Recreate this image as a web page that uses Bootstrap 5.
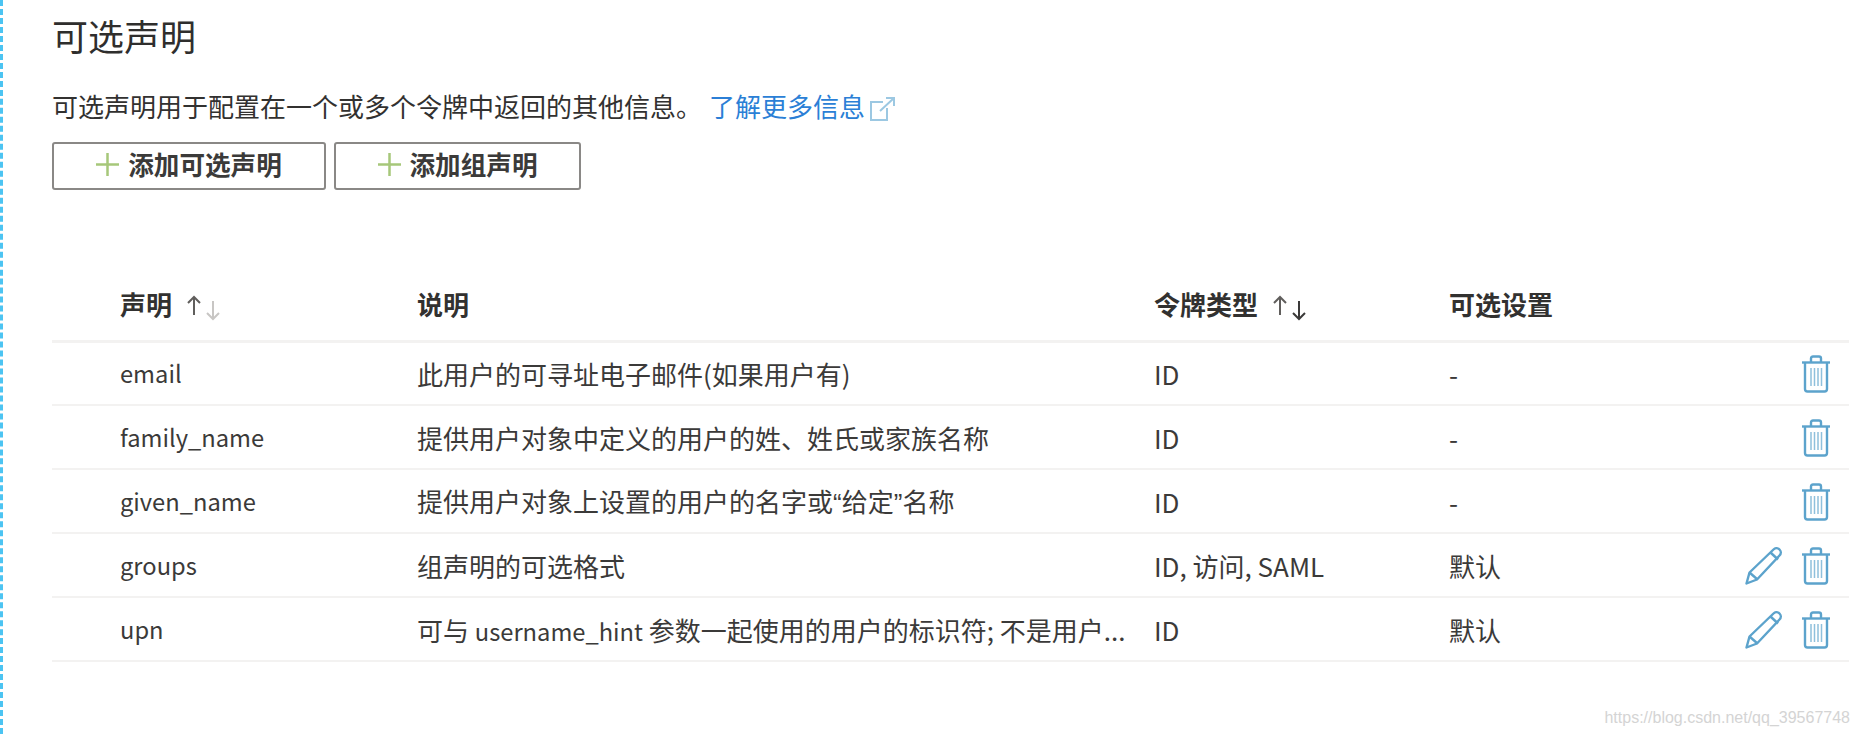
<!DOCTYPE html>
<html lang="zh-CN">
<head>
  <meta charset="UTF-8" />
  <meta name="viewport" content="width=device-width, initial-scale=1.0"/>
  <title>可选声明</title>
  <link href="https://cdn.jsdelivr.net/npm/bootstrap@5.3.0/dist/css/bootstrap.min.css" rel="stylesheet"/>
  <style>
    body {
      font-family: "Noto Sans CJK SC", "Noto Sans", sans-serif;
      font-size: 26px;
      color: #3b3a39;
      background: #fff;
      overflow: hidden;
    }
    .page-wrap {
      height: 734px;
      padding: 0 9px 0 49px;
      border-left: 3px dashed #4cc4f2;
    }
    .page-title {
      font-size: 36px;
      font-weight: 400;
      line-height: 48px;
      padding-top: 11px;
      margin: 0 0 23px;
      color: #2f2e2d;
    }
    .intro {
      line-height: 48px;
      margin-bottom: 12px;
      color: #323130;
    }
    .intro a {
      color: #2b7fd6;
      text-decoration: none;
      margin-left: 7px;
    }
    .ext-icon { width: 27px; height: 26px; margin-left: 4px; vertical-align: -5px; }
    .act-btn {
      height: 48px;
      padding: 0 0 4px;
      border: 2px solid #8a8886;
      border-radius: 3px;
      background: #fff;
      color: #3b3a39;
      font-size: 25.6px;
      font-weight: 600;
      line-height: 1;
    }
    .act-btn svg { width: 23px; height: 23px; margin-right: 9px; }
    .btn-claim { width: 274px; }
    .btn-group-claim { width: 247px; }
    .claims {
      table-layout: fixed;
      margin: 77px 0 0;
      width: 100%;
    }
    .claims th, .claims td {
      padding: 0;
      height: 64px;
      vertical-align: middle;
      border-bottom: 2px solid #f3f2f1;
      color: #3b3a39;
      white-space: nowrap;
    }
    .claims td { padding-top: 1px; }
    .claims th { height: 74px; font-weight: 600; color: #323130; border-bottom-width: 3px; }
    .claims .first-col { width: 365px; padding-left: 68px; }
    .claims td.first-col { font-size: 23.7px; }
    .claims .desc-col { width: 737px; }
    .claims .type-col { width: 295px; }
    .claims .opt-col { width: 261px; }
    .latin-part { font-size: 23.7px; }
    .thin-quote { font-family: "Liberation Sans", sans-serif; }
    .sort-icon { width: 36px; height: 26px; margin-left: 14px; vertical-align: -6px; }
    .row-actions { padding-right: 18px !important; padding-top: 2px !important; }
    .row-actions div { height: 40px; }
    .trash-icon { width: 30px; height: 38px; }
    .edit-icon { width: 38px; height: 38px; margin-right: 18px; }
    .mark-line {
      font-family: "Liberation Sans", sans-serif;
      font-size: 16px;
      color: #d4d4d4;
      margin-top: 44px;
      margin-right: -1px;
    }
  </style>
</head>
<body>
  <svg width="0" height="0" class="d-block">
    <defs>
      <symbol id="trash" viewBox="0 0 30 38">
        <g fill="none" stroke="#5ca3cc" stroke-width="2.400">
          <path d="M1 7.500h28"/>
          <path d="M10 7V3.500C10 2 11 1.500 12 1.500h6c1 0 2 .5 2 2V7"/>
          <path d="M4 8v26c0 1.500 1 2.500 2.500 2.500h17c1.500 0 2.500-1 2.500-2.500V8"/>
        </g>
        <g stroke="#8fc0dc" stroke-width="1.500">
          <path d="M10 13v18M13.500 13v18M17 13v18M20.500 13v18"/>
        </g>
      </symbol>
      <symbol id="pencil" viewBox="0 0 38 38">
        <g fill="none" stroke="#5ca3cc" stroke-width="2.400" stroke-linejoin="round">
          <path d="M1.500 36.500l3-11L28.500 2.500c2-2 4.500-1.500 6 0s2 4 0 6L12 32.500z"/>
          <path d="M4.500 25.500l8 7"/>
          <path d="M25.500 5.500l7.500 7"/>
        </g>
      </symbol>
    </defs>
  </svg>

  <div class="page-wrap">
    <h2 class="page-title">可选声明</h2>
    <div class="intro">可选声明用于配置在一个或多个令牌中返回的其他信息。<a href="#">了解更多信息<svg class="ext-icon" viewBox="0 0 27 26" fill="none" stroke="#9cc8e2" stroke-width="2"><path d="M14 6H2v18h16V12"/><path d="M11 15L25 2M17 2h8v8"/></svg></a></div>

    <div class="d-flex gap-2">
      <button class="btn act-btn btn-claim d-flex align-items-center justify-content-center"><svg viewBox="0 0 23 23" stroke="#a6c77a" stroke-width="2.500"><path d="M11.500 0v23M0 11.500h23"/></svg>添加可选声明</button>
      <button class="btn act-btn btn-group-claim d-flex align-items-center justify-content-center"><svg viewBox="0 0 23 23" stroke="#a6c77a" stroke-width="2.500"><path d="M11.500 0v23M0 11.500h23"/></svg>添加组声明</button>
    </div>

    <table class="table claims">
      <thead>
        <tr>
          <th class="first-col">声明<svg class="sort-icon" viewBox="0 0 36 26" fill="none" stroke-width="2"><path stroke="#605e5c" d="M8 20V2M2 8l6-6 6 6"/><path stroke="#c8c6c4" d="M27 6v18M21 18l6 6 6-6"/></svg></th>
          <th class="desc-col">说明</th>
          <th class="type-col">令牌类型<svg class="sort-icon" viewBox="0 0 36 26" fill="none" stroke-width="2"><path stroke="#605e5c" d="M8 20V2M2 8l6-6 6 6"/><path stroke="#3b3a39" d="M27 6v18M21 18l6 6 6-6"/></svg></th>
          <th class="opt-col">可选设置</th>
          <th></th>
        </tr>
      </thead>
      <tbody>
        <tr>
          <td class="first-col">email</td>
          <td>此用户的可寻址电子邮件(如果用户有)</td>
          <td>ID</td>
          <td>-</td>
          <td class="row-actions"><div class="d-flex justify-content-end align-items-center"><svg class="trash-icon"><use href="#trash"/></svg></div></td>
        </tr>
        <tr>
          <td class="first-col">family_name</td>
          <td>提供用户对象中定义的用户的姓、姓氏或家族名称</td>
          <td>ID</td>
          <td>-</td>
          <td class="row-actions"><div class="d-flex justify-content-end align-items-center"><svg class="trash-icon"><use href="#trash"/></svg></div></td>
        </tr>
        <tr>
          <td class="first-col">given_name</td>
          <td>提供用户对象上设置的用户的名字或<span class="thin-quote">“</span>给定<span class="thin-quote">”</span>名称</td>
          <td>ID</td>
          <td>-</td>
          <td class="row-actions"><div class="d-flex justify-content-end align-items-center"><svg class="trash-icon"><use href="#trash"/></svg></div></td>
        </tr>
        <tr>
          <td class="first-col">groups</td>
          <td>组声明的可选格式</td>
          <td>ID, 访问, SAML</td>
          <td>默认</td>
          <td class="row-actions"><div class="d-flex justify-content-end align-items-center"><svg class="edit-icon"><use href="#pencil"/></svg><svg class="trash-icon"><use href="#trash"/></svg></div></td>
        </tr>
        <tr>
          <td class="first-col">upn</td>
          <td>可与 <span class="latin-part">username_hint</span> 参数一起使用的用户的标识符; 不是用户...</td>
          <td>ID</td>
          <td>默认</td>
          <td class="row-actions"><div class="d-flex justify-content-end align-items-center"><svg class="edit-icon"><use href="#pencil"/></svg><svg class="trash-icon"><use href="#trash"/></svg></div></td>
        </tr>
      </tbody>
    </table>

    <div class="mark-line text-end">https://blog.csdn.net/qq_39567748</div>
  </div>
</body>
</html>
